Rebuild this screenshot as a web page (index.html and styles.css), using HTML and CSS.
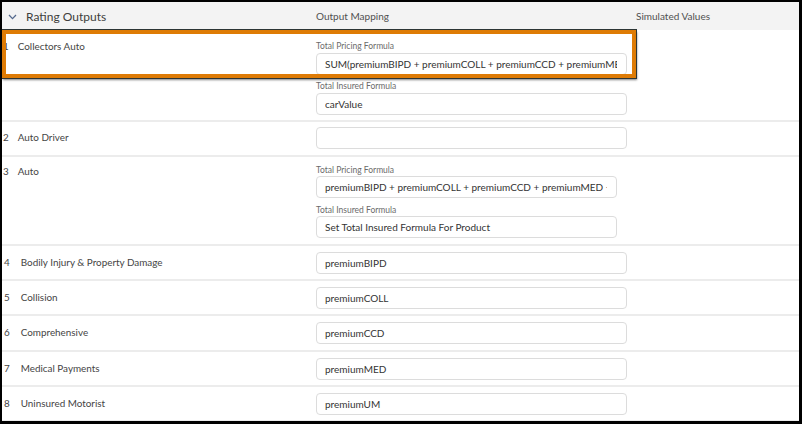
FILE: index.html
```html
<!DOCTYPE html>
<html lang="en">
<head>
<meta charset="utf-8">
<title>Rating Outputs</title>
<link rel="stylesheet" href="styles.css">
</head>
<body>
<div class="frame">
  <div class="panel">
    <div class="head">
      <div class="head-title">
        <svg class="chev" width="9" height="6" viewBox="0 0 9 6"><path d="M1 1 L4.5 4.6 L8 1" fill="none" stroke="#54698d" stroke-width="1.3"/></svg>
        <span>Rating Outputs</span>
      </div>
      <div class="head-col">Output Mapping</div>
      <div class="head-col">Simulated Values</div>
    </div>

    <div class="row row-1">
      <div class="name"><span class="num">1</span>Collectors Auto</div>
      <div class="map">
        <label class="lbl">Total Pricing Formula</label>
        <div class="field"><span class="val">SUM(premiumBIPD + premiumCOLL + premiumCCD + premiumMED + premiumUM)</span></div>
        <label class="lbl lbl-next">Total Insured Formula</label>
        <div class="field"><span class="val">carValue</span></div>
      </div>
      <div class="sim"></div>
    </div>

    <div class="row">
      <div class="name"><span class="num">2</span>Auto Driver</div>
      <div class="map"><div class="field"><span class="val"></span></div></div>
      <div class="sim"></div>
    </div>

    <div class="row row-3">
      <div class="name"><span class="num">3</span>Auto</div>
      <div class="map narrow">
        <label class="lbl">Total Pricing Formula</label>
        <div class="field"><span class="val">premiumBIPD + premiumCOLL + premiumCCD + premiumMED + premiumUM</span></div>
        <label class="lbl lbl-next">Total Insured Formula</label>
        <div class="field"><span class="val">Set Total Insured Formula For Product</span></div>
      </div>
      <div class="sim"></div>
    </div>

    <div class="row coverage">
      <div class="name wide"><span class="num">4</span>Bodily Injury &amp; Property Damage</div>
      <div class="map"><div class="field"><span class="val">premiumBIPD</span></div></div>
      <div class="sim"></div>
    </div>
    <div class="row coverage">
      <div class="name wide"><span class="num">5</span>Collision</div>
      <div class="map"><div class="field"><span class="val">premiumCOLL</span></div></div>
      <div class="sim"></div>
    </div>
    <div class="row coverage">
      <div class="name wide"><span class="num">6</span>Comprehensive</div>
      <div class="map"><div class="field"><span class="val">premiumCCD</span></div></div>
      <div class="sim"></div>
    </div>
    <div class="row coverage">
      <div class="name wide"><span class="num">7</span>Medical Payments</div>
      <div class="map"><div class="field"><span class="val">premiumMED</span></div></div>
      <div class="sim"></div>
    </div>
    <div class="row coverage">
      <div class="name wide"><span class="num">8</span>Uninsured Motorist</div>
      <div class="map"><div class="field"><span class="val">premiumUM</span></div></div>
      <div class="sim"></div>
    </div>

    <div class="callout"></div>
  </div>
</div>
</body>
</html>
```
FILE: styles.css
```css
html, body {
  margin: 0;
  padding: 0;
  background: #000;
}

.frame {
  width: 802px;
  height: 424px;
  box-sizing: border-box;
  padding: 2px 3px 3px 2px;
  background: #000;
}

.panel {
  position: relative;
  height: 100%;
  background: #fff;
  overflow: hidden;
  font-family: "Lato", "Open Sans", sans-serif;
  color: #444;
}

.head {
  display: grid;
  grid-template-columns: 314px 320px 1fr;
  height: 28px;
  align-items: center;
  background: #f3f3f3;
}

.head-title {
  display: flex;
  align-items: center;
  gap: 9px;
  padding-left: 6px;
  font-size: 12px;
  color: #3e3e3c;
}

.chev { margin-top: 1px; }

.head-col {
  font-size: 10px;
  color: #505050;
}

.row {
  display: grid;
  grid-template-columns: 314px 320px 1fr;
  border-bottom: 2px solid #ececec;
}

.name {
  display: flex;
  gap: 9px;
  padding: 9px 0 0 1px;
  font-size: 9.9px;
  line-height: 13px;
  color: #444;
}

.name.wide { gap: 11px; padding-left: 2px; }

.map {
  display: flex;
  flex-direction: column;
  padding: 5px 0 6px 0;
  width: 311px;
}

.map.narrow { width: 301px; }

.coverage .map { padding: 6px 0 5.4px; }
.coverage .name { padding-top: 10px; }

.lbl {
  font-size: 8.5px;
  color: #6b6b6b;
  line-height: 11px;
  margin-bottom: 1px;
}

.lbl-next { margin-top: 6px; }

.field {
  box-sizing: border-box;
  display: flex;
  align-items: center;
  height: 22px;
  border: 1px solid #dcdcdc;
  border-radius: 4px;
  padding: 0 9px 0 8px;
  font-size: 10px;
  color: #333;
}

.val {
  flex: 1;
  min-width: 0;
  white-space: nowrap;
  overflow: hidden;
}

.row-1 .map { padding: 11px 0 5px; }
.row-1 .name { padding-top: 10px; }
.row-3 .map { padding: 8px 0 5.5px; }
.row-3 .lbl { margin-bottom: 0; }
.row-3 .lbl-next { margin-top: 7px; }
.row-3 .name { padding-top: 8px; }

/* highlight around the first mapping row */
.callout {
  position: absolute;
  left: 0;
  top: 28px;
  width: 634px;
  height: 48px;
  box-sizing: border-box;
  border: 4px solid #de7b05;
  box-shadow: 0 0 0 1px #2c3535, 1px 2px 2px rgba(0,0,0,0.5);
  pointer-events: none;
}
```
